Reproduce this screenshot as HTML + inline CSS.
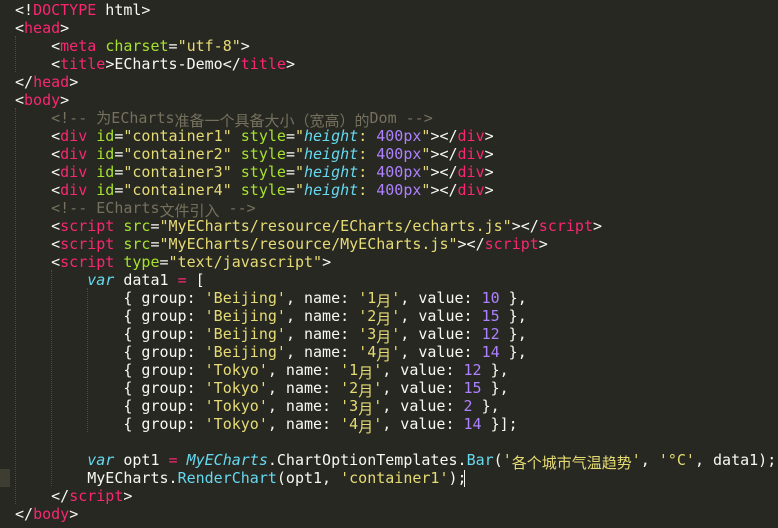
<!DOCTYPE html>
<html><head><meta charset="utf-8"><style>
html,body{margin:0;padding:0;background:#272822;width:778px;height:528px;overflow:hidden}
pre{margin:0;position:absolute;left:15px;top:1px;font-family:"DejaVu Sans Mono","Liberation Mono",monospace;font-size:15px;line-height:18px;color:#f8f8f2;white-space:pre}
.t{color:#f92672}.a{color:#a6e22e}.s{color:#e6db74}.n{color:#ae81ff}.k{color:#66d9ef;font-style:italic}.f{color:#66d9ef}.c{color:#75715e}
.z{font-family:"Noto Sans CJK SC","WenQuanYi Zen Hei",sans-serif;font-size:15px;position:relative;top:3px}
.gut{position:absolute;left:0;top:469px;width:10px;height:18px;background:#3e3d32}
.g{position:absolute;width:0;border-left:1px dotted #4a4a42}
.cur{position:absolute;left:464px;top:470px;width:1px;height:17px;background:#f8f8f0}
</style></head><body>
<div class="gut"></div>
<div class="g" style="left:15px;top:36px;height:36px"></div>
<div class="g" style="left:15px;top:108px;height:396px"></div>
<div class="g" style="left:51px;top:270px;height:216px"></div>
<div class="g" style="left:87px;top:288px;height:144px"></div>
<div class="cur"></div>
<pre>&lt;!<span class="t">DOCTYPE</span> html&gt;
&lt;<span class="t">head</span>&gt;
    &lt;<span class="t">meta</span> <span class="a">charset</span>=<span class="s">"utf-8"</span>&gt;
    &lt;<span class="t">title</span>&gt;ECharts-Demo&lt;/<span class="t">title</span>&gt;
&lt;/<span class="t">head</span>&gt;
&lt;<span class="t">body</span>&gt;
    <span class="c">&lt;!-- <span class="z" style="top:0">为</span>ECharts<span class="z">准备一个具备大小（宽高）的</span>Dom --&gt;</span>
    &lt;<span class="t">div</span> <span class="a">id</span>=<span class="s">"container1"</span> <span class="a">style</span>=<span class="s">"<span class="k">height</span>: <span class="n">400px</span>"</span>&gt;&lt;/<span class="t">div</span>&gt;
    &lt;<span class="t">div</span> <span class="a">id</span>=<span class="s">"container2"</span> <span class="a">style</span>=<span class="s">"<span class="k">height</span>: <span class="n">400px</span>"</span>&gt;&lt;/<span class="t">div</span>&gt;
    &lt;<span class="t">div</span> <span class="a">id</span>=<span class="s">"container3"</span> <span class="a">style</span>=<span class="s">"<span class="k">height</span>: <span class="n">400px</span>"</span>&gt;&lt;/<span class="t">div</span>&gt;
    &lt;<span class="t">div</span> <span class="a">id</span>=<span class="s">"container4"</span> <span class="a">style</span>=<span class="s">"<span class="k">height</span>: <span class="n">400px</span>"</span>&gt;&lt;/<span class="t">div</span>&gt;
    <span class="c">&lt;!-- ECharts<span class="z">文件引入</span> --&gt;</span>
    &lt;<span class="t">script</span> <span class="a">src</span>=<span class="s">"MyECharts/resource/ECharts/echarts.js"</span>&gt;&lt;/<span class="t">script</span>&gt;
    &lt;<span class="t">script</span> <span class="a">src</span>=<span class="s">"MyECharts/resource/MyECharts.js"</span>&gt;&lt;/<span class="t">script</span>&gt;
    &lt;<span class="t">script</span> <span class="a">type</span>=<span class="s">"text/javascript"</span>&gt;
        <span class="k">var</span> data1 <span class="t">=</span> [
            { group: <span class="s">'Beijing'</span>, name: <span class="s">'1<span class="z">月</span>'</span>, value: <span class="n">10</span> },
            { group: <span class="s">'Beijing'</span>, name: <span class="s">'2<span class="z">月</span>'</span>, value: <span class="n">15</span> },
            { group: <span class="s">'Beijing'</span>, name: <span class="s">'3<span class="z">月</span>'</span>, value: <span class="n">12</span> },
            { group: <span class="s">'Beijing'</span>, name: <span class="s">'4<span class="z">月</span>'</span>, value: <span class="n">14</span> },
            { group: <span class="s">'Tokyo'</span>, name: <span class="s">'1<span class="z">月</span>'</span>, value: <span class="n">12</span> },
            { group: <span class="s">'Tokyo'</span>, name: <span class="s">'2<span class="z">月</span>'</span>, value: <span class="n">15</span> },
            { group: <span class="s">'Tokyo'</span>, name: <span class="s">'3<span class="z">月</span>'</span>, value: <span class="n">2</span> },
            { group: <span class="s">'Tokyo'</span>, name: <span class="s">'4<span class="z">月</span>'</span>, value: <span class="n">14</span> }];

        <span class="k">var</span> opt1 <span class="t">=</span> <span class="k">MyECharts</span>.ChartOptionTemplates.<span class="f">Bar</span>(<span class="s">'<span class="z">各个城市气温趋势</span>'</span>, <span class="s">'°C'</span>, data1);
        MyECharts.<span class="f">RenderChart</span>(opt1, <span class="s">'container1'</span>);
    &lt;/<span class="t">script</span>&gt;
&lt;/<span class="t">body</span>&gt;</pre>
</body></html>
